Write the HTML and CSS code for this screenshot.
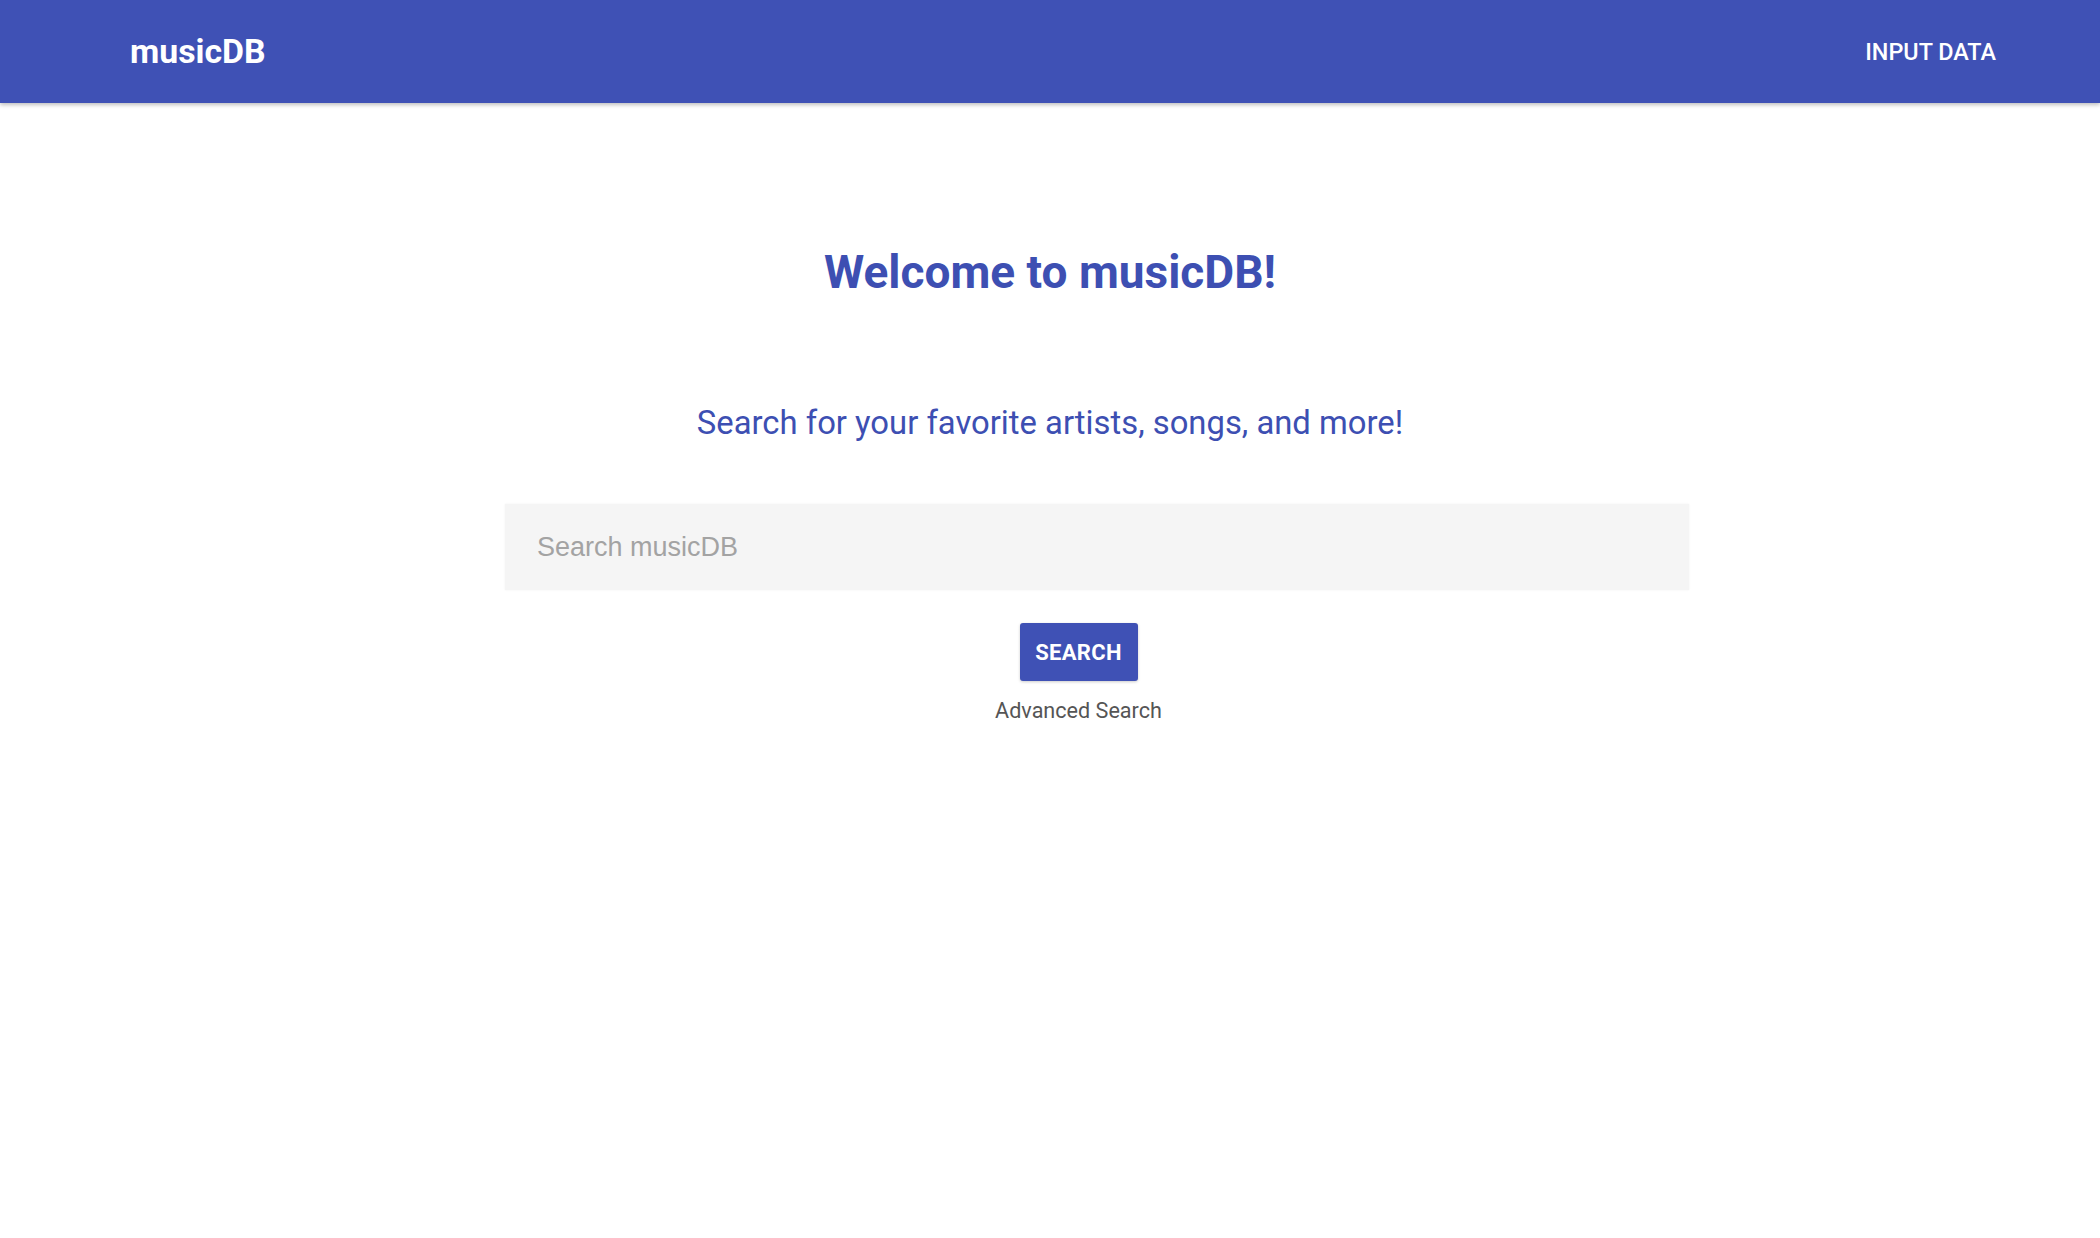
FILE: index.html
```html
<!DOCTYPE html>
<html lang="en">
<head>
<meta charset="utf-8">
<title>musicDB</title>
<link rel="stylesheet" href="styles.css">
</head>
<body>
<header class="topbar">
  <div class="logo">musicDB</div>
  <a class="nav-link" href="#">INPUT DATA</a>
</header>
<main class="home">
  <h1 class="title">Welcome to musicDB!</h1>
  <p class="subtitle">Search for your favorite artists, songs, and more!</p>
  <form class="search-form">
    <input class="search-input" type="text" placeholder="Search musicDB">
    <div class="actions">
      <button class="search-btn" type="button">SEARCH</button>
      <a class="advanced" href="#">Advanced Search</a>
    </div>
  </form>
</main>
</body>
</html>
```

FILE: styles.css
```css
html, body {
  margin: 0;
  padding: 0;
  background: #ffffff;
}

body {
  font-family: Roboto, "Noto Sans", sans-serif;
  width: 2100px;
  min-height: 1238px;
}

.topbar {
  height: 103px;
  background: #3f51b5;
  display: flex;
  align-items: center;
  justify-content: space-between;
  padding: 0 104px 0 130px;
  box-sizing: border-box;
  box-shadow: 0 2px 4px rgba(0, 0, 0, 0.25);
  position: relative;
}

.logo {
  color: #ffffff;
  font-weight: 700;
  font-size: 33.8px;
  line-height: 40px;
  padding-top: 1px;
}

.nav-link {
  color: #ffffff;
  text-decoration: none;
  font-weight: 500;
  font-size: 23.4px;
  line-height: 28px;
  padding-top: 1px;
}

.home {
  display: flex;
  flex-direction: column;
  align-items: center;
}

.title {
  margin: 142px 0 0;
  font-size: 46px;
  line-height: 54px;
  font-weight: 700;
  color: #3d4fb2;
}

.subtitle {
  margin: 106px 0 0;
  font-size: 32.8px;
  line-height: 36px;
  font-weight: 400;
  color: #3d4fb2;
}

.search-form {
  align-self: flex-start;
  margin: 63px 0 0 505px;
  width: 1184px;
  display: flex;
  flex-direction: column;
}

.search-input {
  height: 86px;
  box-sizing: border-box;
  border: none;
  outline: none;
  background: #f5f5f5;
  box-shadow: 0 0 2px rgba(0, 0, 0, 0.06);
  padding: 0 32px;
  font-family: "Liberation Sans", Arial, sans-serif;
  font-size: 27px;
  color: #333;
}

.search-input::placeholder {
  color: #a3a3a3;
}

.actions {
  display: flex;
  flex-direction: column;
  align-items: center;
  padding-right: 37px;
}

.search-btn {
  margin-top: 33px;
  width: 118px;
  height: 58px;
  border: none;
  border-radius: 3px;
  background: #3f51b5;
  color: #ffffff;
  font-family: Roboto, sans-serif;
  font-weight: 700;
  font-size: 22px;
  letter-spacing: 0.3px;
  padding: 0;
  box-shadow: 0 1px 3px rgba(0, 0, 0, 0.2);
}

.advanced {
  margin-top: 17px;
  font-size: 21.6px;
  line-height: 26px;
  color: #555555;
  text-decoration: none;
}
```
